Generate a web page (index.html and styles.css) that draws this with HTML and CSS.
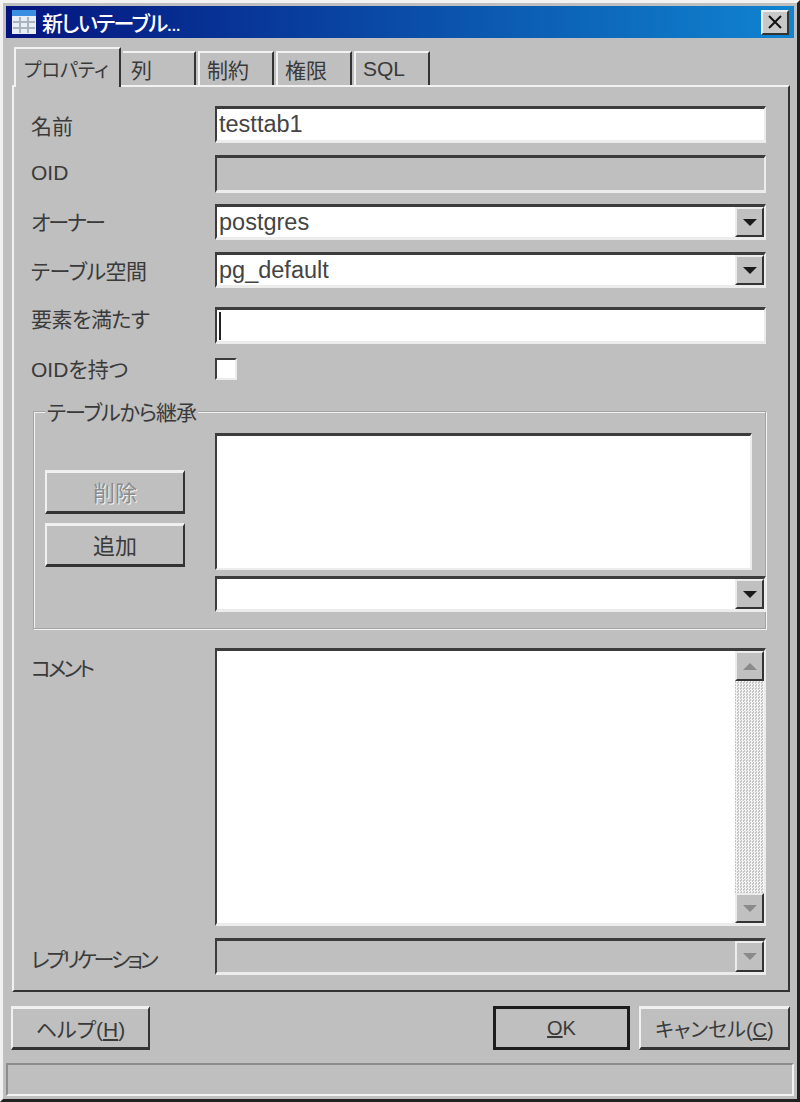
FILE: index.html
```html
<!DOCTYPE html>
<html lang="ja">
<head>
  <meta charset="UTF-8" />
  <title>新しいテーブル...</title>
  <link rel="stylesheet" href="styles.css">
</head>
<body>

<div class="window">
  <!-- タイトルバー -->
  <div class="titlebar">
    <svg class="title-icon" width="26" height="26" viewBox="0 0 26 26">
      <rect x="1" y="1" width="24" height="24" fill="#e8eef6"/>
      <rect x="1" y="1" width="24" height="6" fill="#3a8fe0"/>
      <path d="M2 13h22M2 19h22M9 8v16M17 8v16" stroke="#a9b4bf" stroke-width="2" fill="none"/>
    </svg>
    <span class="title-text">新しいテーブル...</span>
    <button class="close-button">
      <svg width="16" height="14" viewBox="0 0 16 14">
        <path d="M2 1l12 12M14 1L2 13" stroke="#111" stroke-width="2" fill="none"/>
      </svg>
    </button>
  </div>

  <!-- タブ -->
  <div class="tabs">
    <div class="tab tab-active">プロパティ</div>
    <div class="tab tab-columns">列</div>
    <div class="tab tab-normal">制約</div>
    <div class="tab tab-normal">権限</div>
    <div class="tab tab-normal">SQL</div>
  </div>

  <div class="panel">
    <div class="row row-name">
      <label class="row-label label-low">名前</label>
      <div class="field">testtab1</div>
    </div>

    <div class="row row-oid">
      <label class="row-label">OID</label>
      <div class="field field-disabled"></div>
    </div>

    <div class="row row-owner">
      <label class="row-label label-owner">オーナー</label>
      <div class="field combo">
        <span>postgres</span>
        <span class="arrow-button"><i class="arrow-down"></i></span>
      </div>
    </div>

    <div class="row row-space">
      <label class="row-label label-low label-snug">テーブル空間</label>
      <div class="field combo">
        <span>pg_default</span>
        <span class="arrow-button"><i class="arrow-down"></i></span>
      </div>
    </div>

    <div class="row row-fill">
      <label class="row-label label-up label-snug">要素を満たす</label>
      <div class="field"><i class="caret"></i></div>
    </div>

    <div class="row row-check">
      <label class="row-label">OIDを持つ</label>
      <div class="checkbox"></div>
    </div>

    <!-- 継承グループ -->
    <div class="group">
      <span class="group-title">テーブルから継承</span>
      <div class="group-buttons">
        <button class="btn btn-disabled">削除</button>
        <button class="btn">追加</button>
      </div>
      <div class="group-lists">
        <div class="listbox"></div>
        <div class="field combo group-combo">
          <span></span>
          <span class="arrow-button"><i class="arrow-down"></i></span>
        </div>
      </div>
    </div>

    <div class="row row-comment">
      <label class="row-label label-top label-tight">コメント</label>
      <div class="field memo">
        <div class="scrollbar">
          <span class="scroll-button"><i class="arrow-up arrow-gray"></i></span>
          <span class="scroll-track"></span>
          <span class="scroll-button"><i class="arrow-down arrow-gray"></i></span>
        </div>
      </div>
    </div>

    <div class="row row-repl">
      <label class="row-label label-lower label-tight">レプリケーション</label>
      <div class="field field-disabled combo">
        <span></span>
        <span class="arrow-button"><i class="arrow-down arrow-gray"></i></span>
      </div>
    </div>
  </div>

  <!-- 下のボタン -->
  <div class="footer">
    <button class="btn btn-help">ヘルプ(<u>H</u>)</button>
    <div class="footer-right">
      <button class="btn btn-ok"><u>O</u>K</button>
      <button class="btn btn-cancel">キャンセル(<u>C</u>)</button>
    </div>
  </div>

  <div class="statusbar"></div>
</div>

</body>
</html>
```

FILE: styles.css
```css
* {
  box-sizing: border-box;
  margin: 0;
  padding: 0;
}

body {
  width: 800px;
  height: 1102px;
  font-family: "Liberation Sans", "Noto Sans CJK JP", sans-serif;
  font-feature-settings: "palt";
  font-size: 21px;
  color: #3a3a3a;
  background: #bfbfbf;
  overflow: hidden;
}

.window {
  width: 800px;
  height: 1102px;
  padding: 3px;
  background: #bfbfbf;
  border-top: 3px solid #f2f2f2;
  border-left: 3px solid #f2f2f2;
  border-right: 3px solid #222;
  border-bottom: 3px solid #222;
  display: flex;
  flex-direction: column;
}

.titlebar {
  height: 32px;
  flex: none;
  display: flex;
  align-items: center;
  padding: 0 5px;
  background: linear-gradient(to right, #04147f, #1084d0);
}

.title-icon {
  flex: none;
}

.title-text {
  margin-left: 5px;
  color: #fff;
  font-size: 21px;
  font-weight: 500;
  letter-spacing: -1.5px;
}

.close-button {
  margin-left: auto;
  width: 28px;
  height: 25px;
  display: flex;
  align-items: center;
  justify-content: center;
  background: #c8c8c8;
  border: 2px solid;
  border-color: #f0f0f0 #333 #333 #f0f0f0;
}

/* タブ */
.tabs {
  flex: none;
  height: 38px;
  margin-top: 9px;
  padding-left: 8px;
  display: flex;
  align-items: flex-end;
  gap: 2px;
}

.tab {
  height: 34px;
  padding: 0 0 0 7px;
  background: #bfbfbf;
  border-top: 2px solid #f2f2f2;
  border-left: 2px solid #f2f2f2;
  border-right: 2px solid #333;
  display: flex;
  align-items: center;
}

.tab-active {
  position: relative;
  z-index: 1;
  height: 40px;
  width: 107px;
  margin-bottom: -2px;
  padding: 0 0 0 8px;
  font-size: 19px;
}

.tab-columns {
  width: 73px;
  border-left: none;
  padding-left: 8px;
}

.tab-normal {
  width: 76px;
}

.panel {
  flex: 1;
  margin: 0 4px 0 6px;
  padding: 19px 22px 0 17px;
  border-top: 2px solid #f2f2f2;
  border-left: 2px solid #f2f2f2;
  border-right: 2px solid #333;
  border-bottom: 2px solid #333;
  display: flex;
  flex-direction: column;
}

.row {
  display: flex;
  align-items: center;
  flex: none;
}

.row-label {
  width: 184px;
  flex: none;
  padding-bottom: 2px;
  white-space: nowrap;
}

.label-low {
  padding: 0;
}

.label-lower {
  padding: 2px 0 0;
}

.label-up {
  padding-bottom: 16px;
}

.label-top {
  align-self: flex-start;
  padding-top: 4px;
}

.label-snug {
  letter-spacing: -0.5px;
}

.label-owner {
  letter-spacing: -2px;
}

.label-tight {
  letter-spacing: -3px;
}

.row-name { height: 37px; }
.row-oid { height: 38px; margin-top: 12px; }
.row-owner { height: 36px; margin-top: 11px; }
.row-space { height: 36px; margin-top: 12px; }
.row-fill { height: 37px; margin-top: 19px; }
.row-check { height: 22px; margin-top: 14px; }
.row-comment { height: 278px; margin-top: 19px; }
.row-repl { height: 37px; margin-top: 12px; }

/* 入力欄 */
.field {
  flex: 1;
  height: 100%;
  padding-left: 2px;
  display: flex;
  align-items: center;
  background: #fff;
  border-top: 3px solid #3c3c3c;
  border-left: 2px solid #3c3c3c;
  border-right: 2px solid #ececec;
  border-bottom: 3px solid #ececec;
  font-size: 23.5px;
  color: #444;
}

.field-disabled {
  background: #bfbfbf;
}

.caret {
  width: 2px;
  height: 28px;
  background: #222;
}

.combo {
  justify-content: space-between;
  padding-right: 0;
}

.arrow-button,
.scroll-button {
  flex: none;
  width: 29px;
  height: 100%;
  display: flex;
  align-items: center;
  justify-content: center;
  background: #c0c0c0;
  border-top: 2px solid #ececec;
  border-left: 2px solid #ececec;
  border-right: 2px solid #333;
  border-bottom: 2px solid #333;
}

.arrow-down {
  width: 0;
  height: 0;
  border-left: 7px solid transparent;
  border-right: 7px solid transparent;
  border-top: 7px solid #1a1a1a;
}

.arrow-up {
  width: 0;
  height: 0;
  border-left: 7px solid transparent;
  border-right: 7px solid transparent;
  border-bottom: 7px solid #1a1a1a;
}

.arrow-down.arrow-gray {
  border-top-color: #8a8a8a;
}

.arrow-up.arrow-gray {
  border-bottom-color: #8a8a8a;
}

.checkbox {
  width: 22px;
  height: 22px;
  background: #fff;
  border-top: 2px solid #3c3c3c;
  border-left: 2px solid #3c3c3c;
  border-right: 2px solid #ececec;
  border-bottom: 2px solid #ececec;
}

/* 継承グループ */
.group {
  position: relative;
  flex: none;
  height: 218px;
  margin: 31px 0 0 2px;
  padding: 21px 13px 0 11px;
  border: 1px solid #a4a4a4;
  box-shadow: inset 1px 1px #f2f2f2, 1px 1px #f2f2f2;
  display: flex;
  gap: 30px;
}

.group-title {
  position: absolute;
  top: -10px;
  left: 11px;
  padding: 0 2px;
  background: #bfbfbf;
  line-height: 22px;
  letter-spacing: -1px;
  white-space: nowrap;
}

.group-buttons {
  width: 140px;
  flex: none;
  padding-top: 37px;
  display: flex;
  flex-direction: column;
  gap: 9px;
}

.group-buttons .btn {
  font-size: 22px;
  padding-bottom: 2px;
}

.group-lists {
  flex: 1;
  display: flex;
  flex-direction: column;
  gap: 6px;
}

.listbox {
  height: 137px;
  background: #fff;
  border-top: 3px solid #3c3c3c;
  border-left: 2px solid #3c3c3c;
  border-right: 2px solid #ececec;
  border-bottom: 2px solid #ececec;
}

.group-combo {
  flex: none;
  height: 36px;
  margin-right: -14px;
}

/* ボタン */
.btn {
  height: 44px;
  font: inherit;
  font-size: 20px;
  color: inherit;
  background: #bfbfbf;
  border-top: 3px solid #f0f0f0;
  border-left: 2px solid #f0f0f0;
  border-right: 2px solid #333;
  border-bottom: 3px solid #333;
}

.btn-disabled {
  color: #8c8c8c;
  text-shadow: 1px 1px #f4f4f4;
}

.memo {
  padding: 0;
  justify-content: flex-end;
  align-items: stretch;
}

.scrollbar {
  width: 29px;
  display: flex;
  flex-direction: column;
}

.scroll-button {
  width: 29px;
  height: 30px;
}

.scroll-track {
  flex: 1;
  background: repeating-conic-gradient(#f4f4f4 0 25%, #c4c4c4 0 50%) 0 0 / 3px 3px;
}

/* 下のボタン */
.footer {
  flex: none;
  height: 44px;
  margin: 14px 4px 0 5px;
  display: flex;
  justify-content: space-between;
}

.btn-help {
  width: 139px;
  font-size: 21px;
}

.footer-right {
  display: flex;
  gap: 9px;
}

.btn-ok {
  width: 137px;
  border: 3px solid #1c1c1c;
}

.btn-cancel {
  width: 151px;
  white-space: nowrap;
}

.statusbar {
  flex: none;
  height: 33px;
  margin-top: 13px;
  border-top: 2px solid #8c8c8c;
  border-left: 2px solid #8c8c8c;
  border-right: 2px solid #f2f2f2;
  border-bottom: 2px solid #f2f2f2;
}
```
